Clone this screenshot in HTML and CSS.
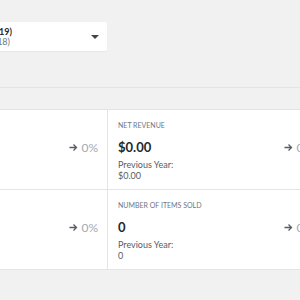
FILE: index.html
```html
<!DOCTYPE html>
<html lang="en">
<head>
    <meta charset="UTF-8">
    <title>Analytics Overview</title>
    <link rel="stylesheet" href="styles.css">
</head>
<body>

    <div class="filters">
        <div class="date-picker">
            <div class="date-text">
                <span class="date-main">Year to date (Jan 1 - Jul 8, 2019)</span>
                <span class="date-compare">vs. Previous Year (Jan 1 - Jul 8, 2018)</span>
            </div>
            <span class="caret"></span>
        </div>
    </div>

    <div class="section-head"></div>

    <div class="summary">
        <div class="summary-item">
            <div class="item-label">Gross Revenue</div>
            <div class="item-row">
                <span class="item-value">$0.00</span>
                <span class="delta"><svg class="arrow" width="9" height="9" viewBox="0 0 9 9"><path d="M0.5 4.5H7.5M4.5 1.5L7.5 4.5L4.5 7.5"/></svg>0%</span>
            </div>
            <div class="item-prev">Previous Year:<br>$0.00</div>
        </div>
        <div class="summary-item">
            <div class="item-label">Net Revenue</div>
            <div class="item-row">
                <span class="item-value">$0.00</span>
                <span class="delta"><svg class="arrow" width="9" height="9" viewBox="0 0 9 9"><path d="M0.5 4.5H7.5M4.5 1.5L7.5 4.5L4.5 7.5"/></svg>0%</span>
            </div>
            <div class="item-prev">Previous Year:<br>$0.00</div>
        </div>
        <div class="summary-item">
            <div class="item-label">Orders</div>
            <div class="item-row">
                <span class="item-value">0</span>
                <span class="delta"><svg class="arrow" width="9" height="9" viewBox="0 0 9 9"><path d="M0.5 4.5H7.5M4.5 1.5L7.5 4.5L4.5 7.5"/></svg>0%</span>
            </div>
            <div class="item-prev">Previous Year:<br>0</div>
        </div>
        <div class="summary-item">
            <div class="item-label">Number of Items Sold</div>
            <div class="item-row">
                <span class="item-value">0</span>
                <span class="delta"><svg class="arrow" width="9" height="9" viewBox="0 0 9 9"><path d="M0.5 4.5H7.5M4.5 1.5L7.5 4.5L4.5 7.5"/></svg>0%</span>
            </div>
            <div class="item-prev">Previous Year:<br>0</div>
        </div>
    </div>

</body>
</html>
```
FILE: styles.css
```css
* {
    margin: 0;
    padding: 0;
    box-sizing: border-box;
}

body {
    font-family: 'Lato', 'Open Sans', sans-serif;
    background-color: #f1f1f1;
    color: #23282d;
    overflow: hidden;
}

/* barra de filtros (recortada a la izquierda) */
.filters {
    padding-top: 22px;
}

.date-picker {
    width: 107px;
    height: 29px;
    background-color: #fff;
    border-radius: 0 2px 2px 0;
    box-shadow: 0 1px 1px rgba(0, 0, 0, 0.04);
    display: flex;
    align-items: center;
    justify-content: space-between;
    padding-right: 8px;
}

/* el texto se alinea a la derecha y sobresale por la izquierda */
.date-text {
    width: 12px;
    display: flex;
    flex-direction: column;
    align-items: flex-end;
    font-size: 9px;
    line-height: 10px;
    white-space: nowrap;
}

.date-main {
    font-weight: 700;
    color: #23282d;
}

.date-compare {
    color: #6c7781;
    margin-right: 2px;
}

.caret {
    width: 0;
    height: 0;
    border-left: 4px solid transparent;
    border-right: 4px solid transparent;
    border-top: 4px solid #40464d;
}

.section-head {
    margin-top: 36px;
    height: 23px;
    border-top: 1px solid #e2e4e7;
    border-bottom: 1px solid #e2e4e7;
}

/* tarjetas de resumen */
.summary {
    display: grid;
    grid-template-columns: 215px 215px;
    margin-left: -107px;
    width: 430px;
    background-color: #fff;
}

.summary-item {
    height: 80px;
    padding: 10px 9px 0 10px;
    border-right: 1px solid #e2e4e7;
    border-bottom: 1px solid #e2e4e7;
}

.item-label {
    font-size: 7px;
    line-height: 10px;
    text-transform: uppercase;
    color: #6c7781;
}

.item-row {
    display: flex;
    justify-content: space-between;
    align-items: center;
    margin-top: 7px;
    height: 20px;
}

.item-value {
    font-size: 13px;
    font-weight: 700;
    color: #23282d;
}

.delta {
    display: flex;
    align-items: center;
    gap: 3px;
    font-size: 12px;
    color: #a2aab2;
}

.arrow {
    fill: none;
    stroke: #555d66;
    stroke-width: 1.3;
}

.item-prev {
    margin-top: 2px;
    font-size: 9px;
    line-height: 11px;
    color: #555d66;
}
```
